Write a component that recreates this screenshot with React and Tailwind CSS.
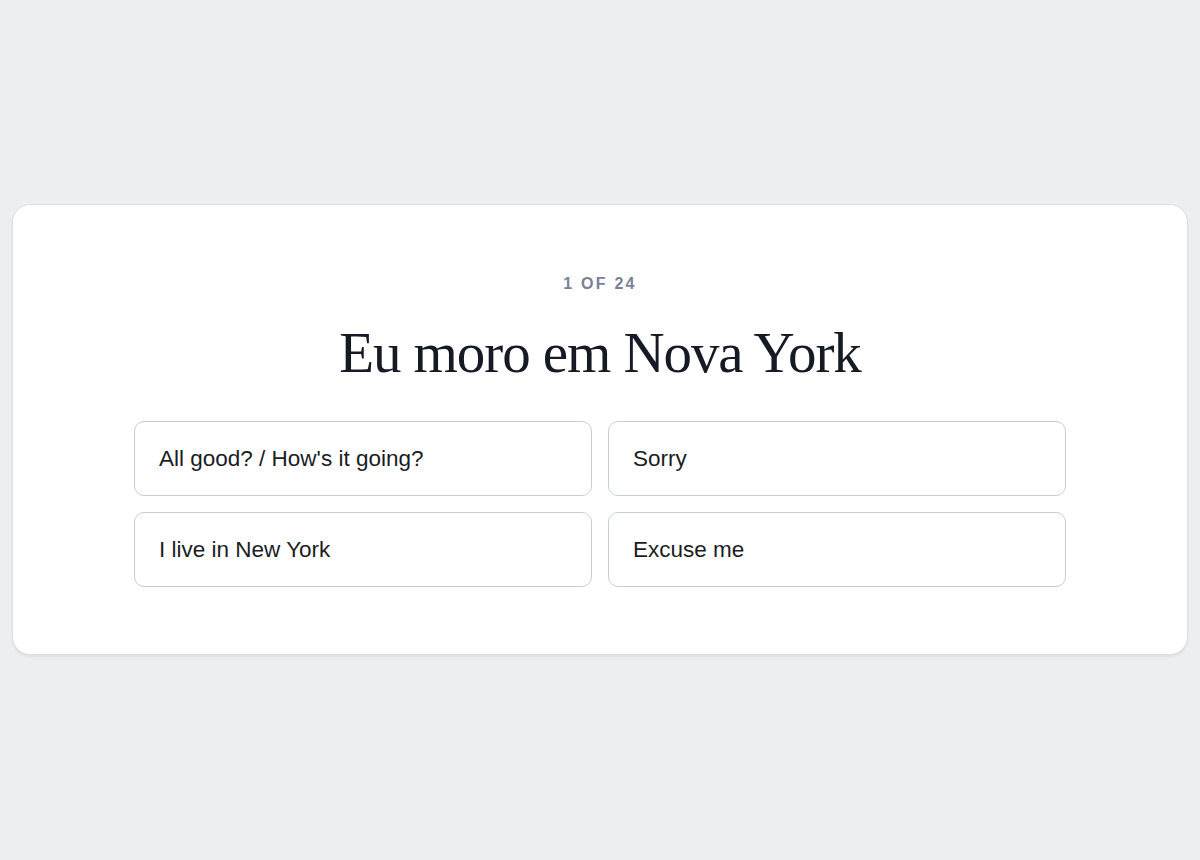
export default function App() {
  const options = ["All good? / How's it going?", "Sorry", "I live in New York", "Excuse me"];
  return (
    <div className="min-h-[860px] w-full bg-[#eceef2] flex items-center justify-center px-3 pb-px" style={{ fontFamily: '"Liberation Sans", Arial, sans-serif' }}>
      <div className="w-full bg-white border border-[#dcdee4] rounded-[18px] shadow-[0_2px_2px_rgba(0,0,0,0.06)] pt-[67px] pb-[67px] flex flex-col items-center">
        <div className="text-[16px] leading-6 font-bold tracking-[0.14em] text-[#7b8195] uppercase">1 of 24</div>
        <h1 className="mt-[28px] text-[57px] leading-none tracking-[-0.019em] text-[#151a24]" style={{ fontFamily: '"Liberation Serif", "Times New Roman", serif' }}>
          Eu moro em Nova York
        </h1>
        <div className="mt-[40px] w-[932px] grid grid-cols-2 gap-4">
          {options.map((o) => (
            <button key={o} className="h-[75px] flex items-center px-6 border border-[#c8ccd4] rounded-[10px] bg-white text-left text-[22.5px] leading-7 text-[#1a1d24]">
              {o}
            </button>
          ))}
        </div>
      </div>
    </div>
  );
}
